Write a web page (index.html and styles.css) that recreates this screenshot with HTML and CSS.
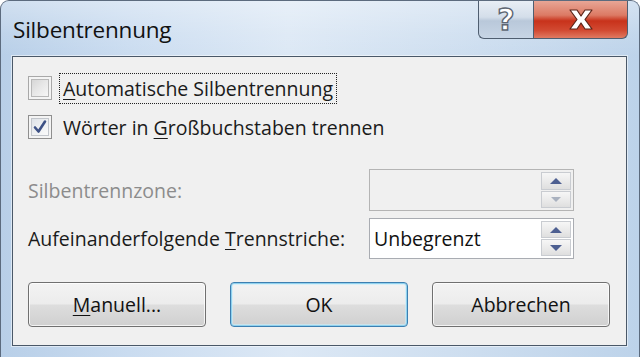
FILE: index.html
```html
<!DOCTYPE html>
<html lang="de">
<head>
<meta charset="utf-8">
<title>Silbentrennung</title>
<link rel="stylesheet" href="styles.css">
</head>
<body>
<div class="window">
  <div class="titlebar">
    <div class="title">Silbentrennung</div>
    <div class="caption-buttons">
      <div class="cbtn help">
        <svg width="54" height="38" viewBox="0 0 54 38">
          <text x="27" y="30" text-anchor="middle" class="qmark">?</text>
        </svg>
      </div>
      <div class="cbtn close">
        <svg width="94" height="38" viewBox="0 0 94 38">
          <path d="M36 10 L43 10 L47 16 L51 10 L58 10 L51 19.5 L58 29 L51 29 L47 23 L43 29 L36 29 L43 19.5 Z" fill="#fff" stroke="#5a2418" stroke-width="1.2" stroke-linejoin="round"/>
        </svg>
      </div>
    </div>
  </div>
  <div class="client">
    <div class="checks">
      <div class="check-row">
        <span class="checkbox unchecked"><span class="inner"></span></span>
        <span class="label focus"><u>A</u>utomatische Silbentrennung</span>
      </div>
      <div class="check-row">
        <span class="checkbox checked">
          <span class="inner">
            <svg width="16" height="16" viewBox="0 0 16 16"><path d="M3 8.5 L6.5 12.5 L13 2.5" fill="none" stroke="#3e5286" stroke-width="2.6" stroke-linecap="round" stroke-linejoin="round"/></svg>
          </span>
        </span>
        <span class="label">Wörter in <u>G</u>roßbuchstaben trennen</span>
      </div>
    </div>
    <div class="fields">
      <div class="field-label disabled">Silbentrennzone:</div>
      <div class="spin disabled-spin">
        <div class="spin-value"></div>
        <div class="spin-btns">
          <div class="sbtn"><span class="arrow up"></span></div>
          <div class="sbtn"><span class="arrow down faint"></span></div>
        </div>
      </div>
      <div class="field-label">Aufeinanderfolgende <u>T</u>rennstriche:</div>
      <div class="spin">
        <div class="spin-value">Unbegrenzt</div>
        <div class="spin-btns">
          <div class="sbtn"><span class="arrow up"></span></div>
          <div class="sbtn"><span class="arrow down"></span></div>
        </div>
      </div>
    </div>
    <div class="buttons">
      <div class="btn"><u>M</u>anuell...</div>
      <div class="btn default">OK</div>
      <div class="btn">Abbrechen</div>
    </div>
  </div>
</div>
</body>
</html>
```

FILE: styles.css
```css
html, body {
  margin: 0;
  padding: 0;
  background: #ffffff;
}
body {
  font-family: "Open Sans", "Noto Sans", "DejaVu Sans", sans-serif;
  color: #1b1b1b;
}
.window {
  width: 640px;
  height: 357px;
  box-sizing: border-box;
  border-radius: 9px 9px 0 0;
  border: 1px solid #5c6b7e;
  border-bottom: none;
  background: linear-gradient(90deg, #b8cfe8 0%, #cadcf0 20%, #dce8f5 45%, #cfdff0 70%, #bdd3ea 100%);
  display: flex;
  flex-direction: column;
  overflow: hidden;
}
.titlebar {
  height: 55px;
  display: flex;
  align-items: flex-start;
  background: linear-gradient(180deg, rgba(255,255,255,0.35) 0%, rgba(255,255,255,0.1) 60%, rgba(255,255,255,0) 100%);
}
.title {
  margin-top: 14px;
  margin-left: 12px;
  font-size: 22.5px;
  line-height: 30px;
  color: #111;
  letter-spacing: -0.2px;
}
.caption-buttons {
  margin-left: auto;
  margin-right: 11px;
  display: flex;
  height: 39px;
  margin-top: -1px;
}
.cbtn {
  height: 39px;
  box-sizing: border-box;
  border: 1px solid #4f5e70;
  border-top: none;
}
.cbtn svg { display: block; }
.help {
  width: 55px;
  border-radius: 0 0 0 6px;
  border-right: none;
  background: linear-gradient(180deg, #e9eff6 0%, #d4deea 45%, #b9c8da 55%, #c7d5e5 100%);
}
.qmark {
  font-family: "DejaVu Sans", sans-serif;
  font-size: 30px;
  font-weight: bold;
  fill: #ffffff;
  stroke: #5d6672;
  stroke-width: 1.4px;
}
.close {
  width: 95px;
  border-radius: 0 0 6px 0;
  background: linear-gradient(180deg, #e9a999 0%, #dc7a64 40%, #c8321b 55%, #d24a32 80%, #e07a62 100%);
}
.client {
  flex: 1;
  margin: 0 12px 11px 11px;
  border: 1px solid #4a5868;
  background: #f0f0f0;
  box-shadow: 0 0 0 1px rgba(255,255,255,0.5);
  display: flex;
  flex-direction: column;
  padding: 16px 16px 0 15px;
  font-size: 19.5px;
}
.checks {
  display: flex;
  flex-direction: column;
  gap: 9px;
}
.check-row {
  display: flex;
  align-items: center;
  height: 30px;
}
.checkbox {
  width: 24px;
  height: 24px;
  box-sizing: border-box;
  border: 1px solid #8f8f8f;
  padding: 2px;
  background: #f4f4f4;
  margin-right: 9px;
}
.checkbox .inner {
  display: flex;
  align-items: center;
  justify-content: center;
  width: 100%;
  height: 100%;
  box-sizing: border-box;
  border: 1px solid #b8b8b8;
  background: linear-gradient(135deg, #d6d6d6 0%, #e8e8e8 50%, #f6f6f6 100%);
}
.checkbox.unchecked { border-color: #a8a8a8; }
.checkbox.checked .inner {
  border-color: #c2c6cc;
  background: linear-gradient(135deg, #dfe3e8 0%, #eef0f2 50%, #fafafa 100%);
}
.label {
  line-height: 27px;
  padding: 0 2px;
  white-space: nowrap;
}
.focus {
  outline: 1px dotted #222;
  outline-offset: 1px;
}
.fields {
  margin-top: 27px;
  display: grid;
  grid-template-columns: 341px 205px;
  row-gap: 7px;
  align-items: center;
}
.field-label {
  white-space: nowrap;
}
.field-label.disabled { color: #8c8c8c; }
.spin {
  height: 41px;
  box-sizing: border-box;
  border: 1px solid #a9acb2;
  background: #ffffff;
  display: flex;
  padding: 1px;
}
.disabled-spin {
  height: 42px;
  background: #f0f0f0;
  border-color: #b4b4b4;
}
.spin-value {
  flex: 1;
  padding-left: 3px;
  line-height: 37px;
  color: #111;
}
.spin-btns {
  width: 30px;
  display: flex;
  flex-direction: column;
  gap: 1px;
  padding: 1px 1px 1px 0;
}
.sbtn {
  flex: 1;
  box-sizing: border-box;
  border: 1px solid #c9ccd1;
  background: linear-gradient(180deg, #f6f6f6 0%, #ebebeb 50%, #dfdfdf 100%);
  display: flex;
  align-items: center;
  justify-content: center;
}
.arrow {
  width: 0;
  height: 0;
  border-left: 6px solid transparent;
  border-right: 6px solid transparent;
}
.arrow.up { border-bottom: 6px solid #4d5f91; }
.arrow.down { border-top: 6px solid #4d5f91; }
.arrow.down.faint {
  border-left-width: 5px;
  border-right-width: 5px;
  border-top: 5px solid #a9b1bf;
}
.buttons {
  margin-top: 23px;
  display: flex;
  gap: 24px;
}
.btn {
  width: 178px;
  height: 45px;
  box-sizing: border-box;
  border: 1px solid #707070;
  border-radius: 4px;
  background: linear-gradient(180deg, #f3f3f3 0%, #ececec 48%, #dddddd 52%, #d0d0d0 100%);
  box-shadow: inset 0 0 0 1px rgba(255,255,255,0.75);
  display: flex;
  align-items: center;
  justify-content: center;
  color: #111;
}
.btn.default {
  border-color: #3c7fb1;
  box-shadow: inset 0 0 0 1px #8fd1ee, inset 0 0 0 2px rgba(200,236,250,0.6);
}
u {
  text-decoration-thickness: 1px;
  text-underline-offset: 3px;
}
```
